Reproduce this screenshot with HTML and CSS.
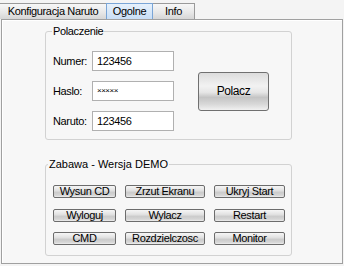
FILE: index.html
```html
<!DOCTYPE html>
<html lang="pl">
<head>
  <meta charset="UTF-8" />
  <title>Konfiguracja Naruto</title>
  <link rel="stylesheet" href="styles.css">
</head>
<body>
  <div class="window">
    <div class="tabs">
      <div class="tab tab-first">Konfiguracja Naruto</div>
      <div class="tab active">Ogolne</div>
      <div class="tab tab-info">Info</div>
    </div>

    <div class="page">
      <!-- Polaczenie -->
      <fieldset class="group conn">
        <legend>Polaczenie</legend>
        <div class="conn-body">
          <div class="fields">
            <div class="row"><label>Numer:</label><div class="edit">123456</div></div>
            <div class="row"><label>Haslo:</label><div class="edit pass">×××××</div></div>
            <div class="row"><label>Naruto:</label><div class="edit">123456</div></div>
          </div>
          <button class="btn big">Polacz</button>
        </div>
      </fieldset>

      <!-- Zabawa -->
      <fieldset class="group fun">
        <legend>Zabawa - Wersja DEMO</legend>
        <div class="grid">
          <button class="btn">Wysun CD</button>
          <button class="btn">Zrzut Ekranu</button>
          <button class="btn">Ukryj Start</button>
          <button class="btn">Wyloguj</button>
          <button class="btn">Wylacz</button>
          <button class="btn">Restart</button>
          <button class="btn">CMD</button>
          <button class="btn">Rozdzielczosc</button>
          <button class="btn">Monitor</button>
        </div>
      </fieldset>
    </div>
  </div>
</body>
</html>
```

FILE: styles.css
```css
body {
  margin: 0;
  background: #f4f4f4;
  font-family: "Liberation Sans", Arial, sans-serif;
  font-size: 11px;
  letter-spacing: -0.35px;
  color: #000;
}

.window {
  width: 344px;
  height: 266px;
  padding-top: 3px;
  box-sizing: border-box;
}

/* Tabs */
.tabs {
  display: flex;
  height: 16px;
}

.tab {
  height: 16px;
  box-sizing: border-box;
  border: 1px solid #9a9a9a;
  border-bottom: none;
  background: linear-gradient(#f7f7f7, #e8e8e8 55%, #d6d6d6);
  line-height: 15px;
  text-align: center;
}

.tab-first {
  width: 107px;
  border-left: none;
}

.tab.active {
  width: 47px;
  margin-left: -1px;
  background: linear-gradient(#e6f1fc, #c9def5);
  border-color: #7aa5d6;
  position: relative;
}

.tab-info {
  width: 43px;
  margin-left: -1px;
}

/* Page */
.page {
  margin-left: 1px;
  width: 342px;
  height: 245px;
  box-sizing: border-box;
  border: 1px solid #a0a0a0;
  background: #f7f7f7;
  box-shadow: inset 1px 1px 0 #fff;
  padding: 5px 0 0 43px;
}

.group {
  margin: 0;
  padding: 0;
  width: 247px;
  box-sizing: border-box;
  border: 1px solid #d2d2d2;
  border-radius: 3px;
}

.group legend {
  padding: 0 1px;
  margin-left: 6px;
  line-height: 12px;
}

.conn-body {
  display: flex;
  align-items: center;
  padding: 14px 0 8px 7px;
}

.fields {
  display: flex;
  flex-direction: column;
  gap: 10px;
}

.row {
  display: flex;
  align-items: center;
  height: 20px;
}

.row label {
  width: 39px;
}

.edit {
  width: 82px;
  height: 20px;
  box-sizing: border-box;
  border: 1px solid #b0b0b0;
  background: #fff;
  padding-left: 4px;
  line-height: 18px;
}

.edit.pass {
  font-size: 8px;
  letter-spacing: -0.5px;
}

/* Buttons */
.btn {
  margin: 0;
  padding: 0;
  height: 13px;
  font-family: inherit;
  font-size: 11px;
  letter-spacing: -0.35px;
  line-height: 11px;
  color: #000;
  border: 1px solid #6c6c6c;
  border-radius: 2px;
  background: linear-gradient(#f6f6f6, #e2e2e2 40%, #cbcbcb 60%, #d6d6d6 85%, #eeeeee);
}

.btn.big {
  margin-left: 24px;
  width: 71px;
  height: 39px;
  font-size: 12px;
  letter-spacing: -0.4px;
  border-radius: 3px;
  border-color: #707070;
  background: linear-gradient(#dcdcdc, #f2f2f2 35%, #e6e6e6 52%, #c4c4c4 66%, #d9d9d9 85%, #f1f1f1);
}

/* Zabawa */
.fun {
  margin-top: 18px;
}

.fun legend {
  margin-left: 2px;
  letter-spacing: 0;
}

.grid {
  display: grid;
  grid-template-columns: 63px 80px 71px;
  column-gap: 9px;
  row-gap: 10.5px;
  padding: 15px 0 10px 7px;
}
```
